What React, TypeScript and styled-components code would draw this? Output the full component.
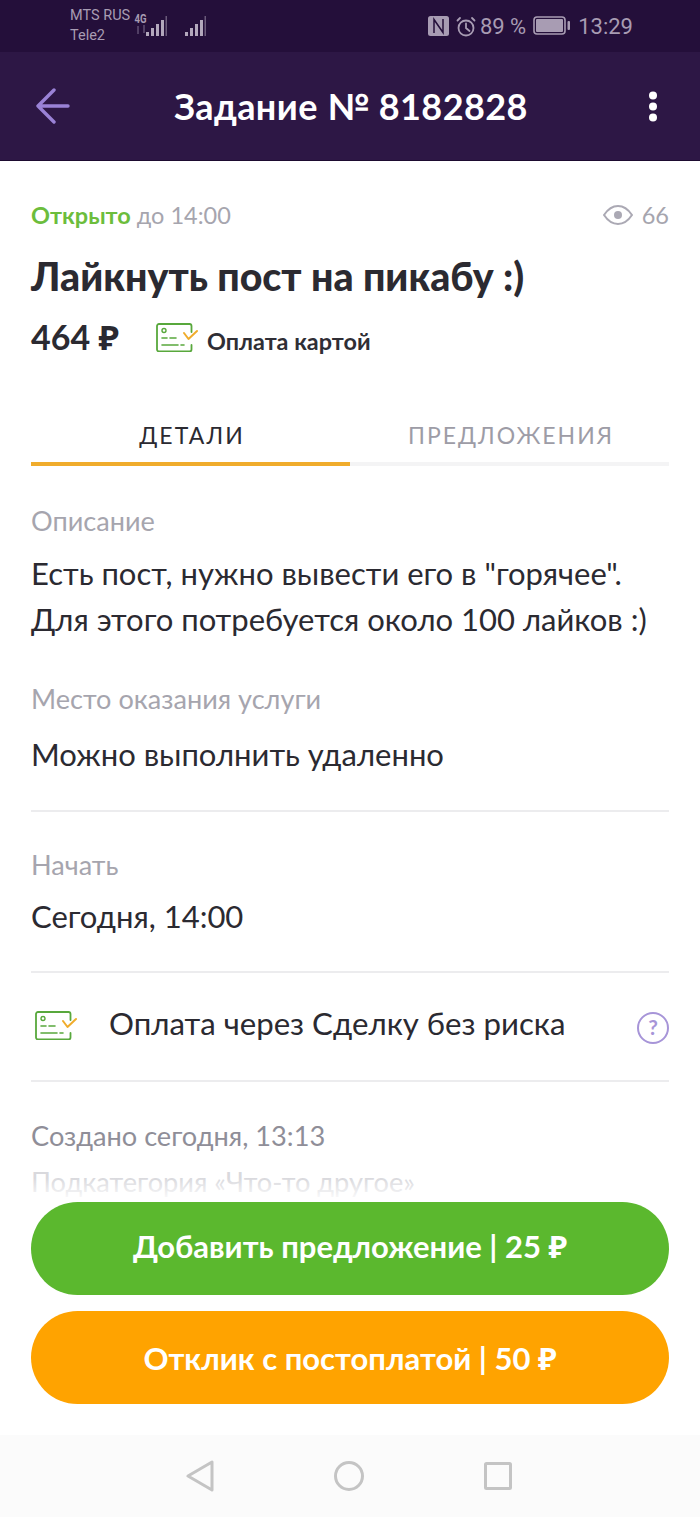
import React from "react";
import styled, { createGlobalStyle } from "styled-components";

const Global = createGlobalStyle`
  html, body { margin: 0; padding: 0; background: #fff; }
  body { font-family: Lato, "Noto Sans", sans-serif; color: #2b2a31; }
  * { box-sizing: border-box; }
`;

const Page = styled.div`
  position: relative;
  width: 700px;
  height: 1517px;
  display: flex;
  flex-direction: column;
  overflow: hidden;
  background: #fff;
`;

const StatusBar = styled.div`
  height: 52px;
  background: #240f3a;
  display: flex;
  align-items: center;
  justify-content: space-between;
  padding: 0 67px 0 70px;
  color: #a89cb3;
  font-family: Roboto, sans-serif;
`;
const StatusLeft = styled.div`display: flex; align-items: center;`;
const Carriers = styled.div`
  display: flex;
  flex-direction: column;
  gap: 2px;
  font-size: 14.5px;
  line-height: 18px;
  width: 65px;
`;
const NetType = styled.div`
  width: 11px;
  display: flex;
  flex-direction: column;
  align-items: center;
  margin-top: -5px;
`;
const FourG = styled.span`
  font-size: 12px;
  line-height: 11px;
  font-weight: 700;
  transform: scaleX(0.8);
`;
const SignalGap = styled.div`width: 18px;`;
const StatusRight = styled.div`display: flex; align-items: center; gap: 7px;`;
const Percent = styled.span`font-size: 22px; margin-left: -3px;`;
const Clock = styled.span`font-size: 22px;`;

const Header = styled.header`
  height: 109px;
  background: #2d1745;
  display: grid;
  grid-template-columns: 1fr auto 1fr;
  align-items: center;
  padding: 0 42px 0 36px;
  border-bottom: 1px solid #1d0b30;
`;
const HeaderTitle = styled.h1`
  margin: 0 0 0 8px;
  font-size: 36px;
  font-weight: 700;
  color: #fff;
  letter-spacing: 0.4px;
`;
const HeaderMenu = styled.div`display: flex; justify-content: flex-end;`;

const Body = styled.main`
  flex: 1;
  padding: 39px 31px 0;
  overflow: hidden;
`;
const MetaRow = styled.div`
  display: flex;
  justify-content: space-between;
  align-items: center;
  font-size: 23.5px;
  line-height: 30px;
  color: #a6a5ae;
`;
const OpenLabel = styled.span`color: #6cbd3c; font-weight: 700;`;
const Views = styled.div`display: flex; align-items: center; gap: 9px;`;
const Title = styled.h2`
  margin: 24px 0 0;
  font-size: 39.3px;
  line-height: 44px;
  font-weight: 900;
  color: #2b2a31;
`;
const PriceRow = styled.div`
  margin-top: 17px;
  display: flex;
  align-items: center;
  height: 44px;
`;
const Price = styled.span`
  font-size: 34px;
  font-weight: 700;
  width: 125px;
`;
const PayLabel = styled.span`
  font-size: 23.4px;
  font-weight: 700;
  margin: 8px 0 0 9px;
  color: #2f2e35;
`;

const Tabs = styled.div`
  margin-top: 55px;
  display: grid;
  grid-template-columns: 319px 1fr;
  border-bottom: 4px solid #f4f4f5;
`;
const Tab = styled.div<{ $active?: boolean }>`
  height: 52px;
  margin-bottom: -4px;
  border-bottom: 4px solid ${(p) => (p.$active ? "#f0ac2c" : "transparent")};
  color: ${(p) => (p.$active ? "#2b2a31" : "#9d9ca6")};
  text-align: center;
  font-size: 23px;
  line-height: 30px;
  letter-spacing: 2px;
  padding: 6px 0 0 3px;
  text-transform: uppercase;
`;

const FieldLabel = styled.div`
  font-size: 27.1px;
  line-height: 34px;
  color: #a6a5ae;
`;
const FieldText = styled.p<{ $top: number }>`
  margin: ${(p) => p.$top}px 0 0;
  font-size: 31px;
  line-height: 46px;
  color: #2b2a31;
`;
const Section = styled.section<{ $top: number; $bottom?: number; $line?: boolean }>`
  padding-top: ${(p) => p.$top}px;
  padding-bottom: ${(p) => p.$bottom ?? 0}px;
  border-bottom: ${(p) => (p.$line ? "2px solid #ececee" : "none")};
`;
const PayRow = styled.div`
  display: flex;
  align-items: center;
  height: 109px;
  padding-bottom: 7px;
  border-bottom: 2px solid #ececee;
  font-size: 31.2px;
  color: #2b2a31;
`;
const PayIconSlot = styled.span`display: flex; margin: 5px 0 0 4px;`;
const PayText = styled.span`flex: 1; margin-left: 32px;`;
const InfoLine = styled.div<{ $faint?: boolean }>`
  font-size: 27.2px;
  line-height: 46px;
  color: ${(p) => (p.$faint ? "#d9d9dd" : "#8f8e98")};
`;

const Footer = styled.div`
  position: absolute;
  left: 0;
  right: 0;
  bottom: 0;
  display: flex;
  flex-direction: column;
`;
const Actions = styled.div`
  padding: 24px 31px 31px;
  display: flex;
  flex-direction: column;
  gap: 16px;
  background: linear-gradient(to bottom, rgba(255,255,255,0) 0, #fff 24px);
`;
const Action = styled.button<{ $color: string; $lift?: number }>`
  height: 93px;
  border: 0;
  border-radius: 47px;
  padding: 0 0 ${(p) => p.$lift ?? 0}px;
  background: ${(p) => p.$color};
  color: #fff;
  font-family: inherit;
  font-size: 31px;
  font-weight: 700;
`;
const NavBar = styled.nav`
  height: 82px;
  background: #fbfbfb;
  display: flex;
  align-items: center;
  justify-content: center;
  gap: 120px;
  padding-right: 2px;
`;

const CardIcon = () => (
  <svg width="42" height="29" viewBox="0 0 42 29" fill="none">
    <path d="M35.500 22v4.500a2 2 0 0 1-2 2H3a2 2 0 0 1-2-2V3a2 2 0 0 1 2-2h30.500a2 2 0 0 1 2 2v6" stroke="#58a83c" strokeWidth="1.800" strokeLinecap="round" />
    <circle cx="8" cy="7.500" r="2" stroke="#58a83c" strokeWidth="1.400" />
    <path d="M6 15h5M14 15h6M6 22h16M25 22h3" stroke="#58a83c" strokeWidth="1.600" strokeLinecap="round" />
    <path d="M28 10l4.500 6L41 8" stroke="#f0ac2c" strokeWidth="2" strokeLinecap="round" strokeLinejoin="round" />
  </svg>
);

const Signal = () => (
  <svg width="21" height="22" viewBox="0 0 21 22" fill="#b3a8bc">
    <rect x="0" y="17" width="3" height="4" />
    <rect x="5" y="13" width="3" height="8" />
    <rect x="10" y="9" width="3" height="12" />
    <rect x="15" y="5" width="3" height="16" />
    <rect x="19.500" y="1" width="1.500" height="20" fill="#6a5a7a" />
  </svg>
);

export default function App() {
  return (
    <Page>
      <Global />
      <StatusBar>
        <StatusLeft>
          <Carriers>
            <span>MTS RUS</span>
            <span>Tele2</span>
          </Carriers>
          <NetType>
            <FourG>4G</FourG>
            <svg width="10" height="9" viewBox="0 0 10 9" stroke="#6f5f80" strokeWidth="1.200" fill="none">
              <path d="M2 9V1M8 0v8" />
            </svg>
          </NetType>
          <Signal />
          <SignalGap />
          <Signal />
        </StatusLeft>
        <StatusRight>
          <svg width="21" height="20" viewBox="0 0 21 20">
            <rect width="21" height="20" rx="2.500" fill="#a89cb3" />
            <path d="M6 17V3.500L15 16.500V3" fill="none" stroke="#240f3a" strokeWidth="1.500" />
          </svg>
          <svg width="20" height="21" viewBox="0 0 20 21" fill="none" stroke="#a89cb3" strokeWidth="1.800" strokeLinecap="round">
            <circle cx="10" cy="12" r="7.500" />
            <path d="M10 7.500V12l3.500 3M1.500 4.500L4 2M18.500 4.500L16 2" />
          </svg>
          <Percent>89 %</Percent>
          <svg width="38" height="20" viewBox="0 0 38 20">
            <rect x="1" y="1" width="31" height="17" rx="3" fill="none" stroke="#a89cb3" strokeWidth="1.600" />
            <rect x="3" y="3" width="27" height="13" rx="1" fill="#a89cb3" />
            <rect x="34.500" y="5" width="2.500" height="9" rx="1" fill="#a89cb3" />
          </svg>
          <Clock>13:29</Clock>
        </StatusRight>
      </StatusBar>
      <Header>
        <svg width="34" height="36" viewBox="0 0 34 36" fill="none" stroke="#9a82d6" strokeWidth="3.400" strokeLinecap="round" strokeLinejoin="round">
          <path d="M32 18H2M18 2L2 18l16 16" />
        </svg>
        <HeaderTitle>Задание № 8182828</HeaderTitle>
        <HeaderMenu>
          <svg width="10" height="31" viewBox="0 0 10 31" fill="#fff">
            <circle cx="5" cy="4.500" r="4" />
            <circle cx="5" cy="15.500" r="4" />
            <circle cx="5" cy="26.500" r="4" />
          </svg>
        </HeaderMenu>
      </Header>
      <Body>
        <MetaRow>
          <span><OpenLabel>Открыто</OpenLabel> до 14:00</span>
          <Views>
            <svg width="30" height="20" viewBox="0 0 30 20" fill="none" stroke="#aba9b4" strokeWidth="2">
              <path d="M1 10C5 4 10 1 15 1s10 3 14 9c-4 6-9 9-14 9S5 16 1 10z" />
              <circle cx="15" cy="10" r="4" fill="#aba9b4" stroke="none" />
            </svg>
            66
          </Views>
        </MetaRow>
        <Title>Лайкнуть пост на пикабу :)</Title>
        <PriceRow>
          <Price>464 ₽</Price>
          <CardIcon />
          <PayLabel>Оплата картой</PayLabel>
        </PriceRow>
        <Tabs>
          <Tab $active>Детали</Tab>
          <Tab>Предложения</Tab>
        </Tabs>
        <Section $top={38}>
          <FieldLabel>Описание</FieldLabel>
          <FieldText $top={12}>
            Есть пост, нужно вывести его в "горячее".<br />Для этого потребуется около 100 лайков :)
          </FieldText>
        </Section>
        <Section $top={40} $bottom={33} $line>
          <FieldLabel>Место оказания услуги</FieldLabel>
          <FieldText $top={15}>Можно выполнить удаленно</FieldText>
        </Section>
        <Section $top={36} $bottom={32} $line>
          <FieldLabel>Начать</FieldLabel>
          <FieldText $top={11}>Сегодня, 14:00</FieldText>
        </Section>
        <PayRow>
          <PayIconSlot><CardIcon /></PayIconSlot>
          <PayText>Оплата через Сделку без риска</PayText>
          <svg width="32" height="32" viewBox="0 0 32 32" fill="none" style={{ marginTop: 9 }}>
            <circle cx="16" cy="16" r="15" stroke="#a795d8" strokeWidth="2" />
            <text x="16" y="23" textAnchor="middle" fontSize="21" fontWeight="700" fontFamily="Lato, sans-serif" fill="#a795d8">?</text>
          </svg>
        </PayRow>
        <Section $top={31}>
          <InfoLine>Создано сегодня, 13:13</InfoLine>
          <InfoLine $faint>Подкатегория «Что-то другое»</InfoLine>
        </Section>
      </Body>
      <Footer>
        <Actions>
          <Action $color="#5bb82e" $lift={5}>Добавить предложение | 25 ₽</Action>
          <Action $color="#ffa300">Отклик с постоплатой | 50 ₽</Action>
        </Actions>
        <NavBar>
          <svg width="28" height="32" viewBox="0 0 28 32" fill="none" stroke="#c4c4c4" strokeWidth="3" strokeLinejoin="round"><path d="M26 2v28L2 16z" /></svg>
          <svg width="30" height="32" viewBox="0 0 30 32" fill="none" stroke="#c4c4c4" strokeWidth="3"><circle cx="15" cy="16" r="13.500" /></svg>
          <svg width="28" height="28" viewBox="0 0 28 28" fill="none" stroke="#c4c4c4" strokeWidth="3" strokeLinejoin="round"><rect x="1.500" y="1.500" width="25" height="25" rx="1" /></svg>
        </NavBar>
      </Footer>
    </Page>
  );
}
